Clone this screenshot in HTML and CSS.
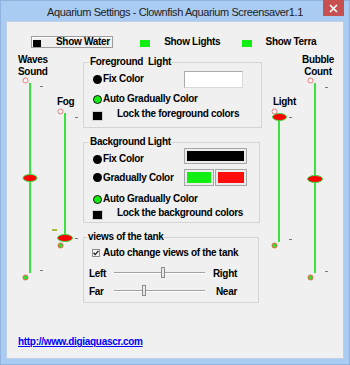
FILE: index.html
```html
<!DOCTYPE html>
<html>
<head>
<meta charset="utf-8">
<title>Aquarium Settings</title>
<link rel="stylesheet" href="styles.css">
</head>
<body>
<div class="window">
  <div class="titlebar">
    <span class="title-text">Aquarium Settings - Clownfish Aquarium Screensaver1.1</span>
    <div class="close-btn">
      <svg width="9" height="9" viewBox="0 0 9 9"><path d="M1 1 L8 8 M8 1 L1 8" stroke="#fff" stroke-width="1.6"/></svg>
    </div>
  </div>
  <div class="client">
    <div class="toprow">
      <div class="water-btn"><span class="sq sq-black"></span><span class="water-text">Show Water</span></div>
      <div class="toggle"><span class="sq sq-green"></span><span class="toggle-text">Show Lights</span></div>
      <div class="toggle"><span class="sq sq-green"></span><span class="toggle-text">Show Terra</span></div>
    </div>

    <div class="main">
      <div class="side side-left">
        <div class="vslider vs-waves">
          <div class="vs-label">Waves<br>Sound</div>
          <svg class="vs-svg" width="26" height="202" viewBox="0 0 26 202">
            <circle cx="7.5" cy="2.5" r="2.5" fill="#f6f6f6" stroke="#f07a7a" stroke-width="1"/>
            <rect x="11" y="5" width="2" height="190" fill="#3ee23e"/>
            <rect x="22" y="8" width="3" height="1" fill="#7a7a7a"/>
            <ellipse cx="12" cy="100" rx="7" ry="3.5" fill="#ff0000" stroke="#3ed83e" stroke-width="1"/>
            <rect x="22" y="192" width="3" height="1" fill="#7a7a7a"/>
            <circle cx="7.5" cy="199.5" r="2.5" fill="#2ee02e" stroke="#f0604a" stroke-width="1"/>
          </svg>
        </div>
        <div class="vslider vs-fog">
          <div class="vs-label">Fog</div>
          <svg class="vs-svg" width="30" height="141" viewBox="0 0 30 141">
            <circle cx="9.5" cy="3.5" r="2.5" fill="#f6f6f6" stroke="#f07a7a" stroke-width="1"/>
            <rect x="13" y="5" width="2" height="125" fill="#3ee23e"/>
            <rect x="24" y="9" width="3" height="1" fill="#7a7a7a"/>
            <rect x="1" y="121" width="5" height="2" fill="#a9b640"/>
            <ellipse cx="14" cy="130" rx="7.5" ry="3.5" fill="#ff0000" stroke="#3ed83e" stroke-width="1"/>
            <rect x="24" y="130" width="3" height="1" fill="#7a7a7a"/>
            <circle cx="9.5" cy="137.5" r="2.5" fill="#2ee02e" stroke="#f0604a" stroke-width="1"/>
          </svg>
        </div>
      </div>

      <div class="center">
        <div class="group group-fg">
          <div class="group-title">Foreground  Light</div>
          <div class="row fg-row1">
            <span class="dot dot-black"></span><span class="opt-label">Fix Color</span>
            <span class="swatch swatch-white"></span>
          </div>
          <div class="row fg-row2">
            <span class="dot dot-green"></span><span class="opt-label">Auto Gradually Color</span>
          </div>
          <div class="row lock-row fg-row3">
            <span class="lock-sq"></span><span class="lock-text">Lock the foreground colors</span>
          </div>
        </div>

        <div class="group group-bg">
          <div class="group-title">Background Light</div>
          <div class="row bg-row1">
            <span class="dot dot-black"></span><span class="opt-label">Fix Color</span>
            <span class="swatch swatch-black"></span>
          </div>
          <div class="row bg-row2">
            <span class="dot dot-black"></span><span class="opt-label">Gradually Color</span>
            <span class="swatch swatch-green"></span><span class="swatch swatch-red"></span>
          </div>
          <div class="row bg-row3">
            <span class="dot dot-green"></span><span class="opt-label">Auto Gradually Color</span>
          </div>
          <div class="row lock-row bg-row4">
            <span class="lock-sq"></span><span class="lock-text">Lock the background colors</span>
          </div>
        </div>

        <div class="group group-views">
          <div class="group-title">views of the tank</div>
          <div class="row check-row">
            <svg class="checkbox" width="8" height="8" viewBox="0 0 8 8">
              <rect x="0.5" y="0.5" width="7" height="7" fill="#f4f4f4" stroke="#8a8a8a"/>
              <path d="M1.6 3.8 L3.2 5.6 L6.4 1.8" fill="none" stroke="#1a1a1a" stroke-width="1.3"/>
            </svg>
            <span class="check-text">Auto change views of the tank</span>
          </div>
          <div class="row hs-row hs-lr">
            <span class="hs-start">Left</span>
            <div class="track"><div class="groove"></div><div class="hthumb" style="left:47px"></div></div>
            <span class="hs-end">Right</span>
          </div>
          <div class="row hs-row hs-fn">
            <span class="hs-start">Far</span>
            <div class="track"><div class="groove"></div><div class="hthumb" style="left:28px"></div></div>
            <span class="hs-end">Near</span>
          </div>
        </div>
      </div>

      <div class="side side-right">
        <div class="vslider vs-light">
          <div class="vs-label">Light</div>
          <svg class="vs-svg" width="28" height="141" viewBox="0 0 28 141">
            <circle cx="4.5" cy="3.5" r="2.5" fill="#f6f6f6" stroke="#f07a7a" stroke-width="1"/>
            <rect x="8" y="9" width="2" height="125" fill="#3ee23e"/>
            <ellipse cx="9.5" cy="9" rx="7" ry="3.5" fill="#ff0000" stroke="#3ed83e" stroke-width="1"/>
            <rect x="19" y="9" width="3" height="1" fill="#7a7a7a"/>
            <rect x="19" y="131" width="3" height="1" fill="#7a7a7a"/>
            <circle cx="4.5" cy="137.5" r="2.5" fill="#2ee02e" stroke="#f0604a" stroke-width="1"/>
          </svg>
        </div>
        <div class="vslider vs-bubble">
          <div class="vs-label">Bubble<br>Count</div>
          <svg class="vs-svg" width="28" height="202" viewBox="0 0 28 202">
            <circle cx="8.5" cy="2.5" r="2.5" fill="#f6f6f6" stroke="#f07a7a" stroke-width="1"/>
            <rect x="12" y="5" width="2" height="190" fill="#3ee23e"/>
            <rect x="23" y="9" width="3" height="1" fill="#7a7a7a"/>
            <ellipse cx="13" cy="101" rx="7.5" ry="3.5" fill="#ff0000" stroke="#3ed83e" stroke-width="1"/>
            <rect x="23" y="193" width="3" height="1" fill="#7a7a7a"/>
            <circle cx="8.5" cy="199.5" r="2.5" fill="#2ee02e" stroke="#f0604a" stroke-width="1"/>
          </svg>
        </div>
      </div>
    </div>

    <a class="link" href="#">http://www.digiaquascr.com</a>
  </div>
</div>
</body>
</html>
```

FILE: styles.css
```css
* { box-sizing: border-box; }
html, body { margin: 0; padding: 0; }
body {
  width: 350px;
  height: 365px;
  overflow: hidden;
  background: #aacbf2;
  font-family: "Liberation Sans", Arial, sans-serif;
}
.window {
  width: 350px;
  height: 365px;
  background: #aacbf2;
  border: 1px solid #8fb2df;
  padding: 0 6px 6px 6px;
  display: flex;
  flex-direction: column;
}
.titlebar {
  position: relative;
  height: 21px;
  margin: 0 -6px;
  display: flex;
  align-items: center;
  justify-content: center;
}
.title-text {
  font-family: "Liberation Sans", Arial, sans-serif;
  font-size: 11px;
  letter-spacing: -0.4px;
  color: #222;
  padding-top: 1px;
}
.close-btn {
  position: absolute;
  top: -1px;
  right: 5px;
  width: 21px;
  height: 16px;
  background: #c75050;
  display: flex;
  align-items: center;
  justify-content: center;
}
.close-btn svg { display: block; }

.client {
  flex: 1;
  background: #f0f0f0;
  box-shadow: 0 0 0 1px #bccfe7;
  display: flex;
  flex-direction: column;
  font-family: "Liberation Sans", Arial, sans-serif;
  font-size: 10px;
  font-weight: bold;
  letter-spacing: -0.3px;
  color: #000;
}

/* top row */
.toprow {
  display: flex;
  align-items: stretch;
  padding: 14px 0 0 24px;
  height: 26px;
}
.water-btn {
  width: 85px;
  height: 12px;
  border: 1px solid #9c9c9c;
  background: #efefef;
  box-shadow: inset 1px 1px 0 #fff;
  display: flex;
  align-items: center;
  margin-right: 27px;
}
.sq { display: block; }
.sq-black {
  width: 8px;
  height: 7px;
  background: #000;
  margin-left: 1px;
  align-self: flex-end;
}
.water-text { margin-left: 15px; line-height: 10px; }
.toggle {
  width: 105px;
  display: flex;
  align-items: center;
}
.sq-green {
  width: 10px;
  height: 7px;
  background: #11ee11;
  align-self: flex-end;
  margin-bottom: 1px;
}
.toggle-text { margin-left: 14px; line-height: 10px; }

/* main area */
.main {
  display: flex;
  margin-top: 6px;
  height: 262px;
}
.side { display: flex; align-items: flex-start; }
.side-left { width: 76px; padding-left: 11px; }
.side-right { flex: 1; padding-left: 8px; }
.vslider { display: flex; flex-direction: column; }
.vs-label { line-height: 12px; white-space: nowrap; }
.vs-svg { display: block; overflow: visible; }
.vs-waves { width: 33px; }
.vs-fog { width: 30px; margin-top: 42px; }
.vs-fog .vs-label { padding-left: 6px; }
.vs-light { width: 32px; margin-top: 42px; }
.vs-light .vs-label { padding-left: 3px; }
.vs-bubble { width: 33px; }
.vs-bubble .vs-label { width: 32px; text-align: center; }

.center {
  width: 179px;
  padding-top: 8px;
  display: flex;
  flex-direction: column;
  gap: 14px;
}
.group {
  border: 1px solid #d4d4d4;
}
.group-fg { height: 66px; width: 179px; }
.group-bg { height: 81px; width: 177px; }
.group-views { height: 66px; width: 176px; }
.group-title {
  width: max-content;
  margin: -7px 0 0 5px;
  padding: 0 1px;
  background: #f0f0f0;
  line-height: 12px;
  height: 12px;
  white-space: pre;
}
.group-views .group-title { margin-left: 3px; }

.row {
  display: flex;
  align-items: center;
  padding-left: 9px;
}
.dot {
  width: 9px;
  height: 9px;
  border-radius: 50%;
  flex: none;
}
.dot-black { background: #000; }
.dot-green { background: #11ee11; border: 1px solid #111; }
.opt-label { margin-left: 1px; width: 81px; white-space: nowrap; line-height: 12px; }
.swatch { display: block; flex: none; border: 1px solid #a6a6a6; box-shadow: inset 0 0 0 2px #ececec; }
.swatch-white { width: 59px; height: 17px; background: #fff; box-shadow: none; border-color: #ababab #d8d8d8 #d8d8d8 #ababab; }
.swatch-black { width: 63px; height: 16px; background: #000; align-self: flex-start; margin-top: -2px; }
.swatch-green { width: 30px; height: 17px; background: #11ee11; }
.swatch-red { width: 32px; height: 17px; background: #ff0d0d; margin-left: 1px; }

.fg-row1 { margin-top: 2px; height: 18px; }
.fg-row2 { margin-top: 4px; height: 14px; }
.fg-row3 { margin-top: 2px; }
.lock-row { height: 12px; align-items: flex-start; }
.lock-sq {
  width: 9px;
  height: 8px;
  background: #000;
  margin-top: 4px;
  box-shadow: 0 0 0 1px #d0d0d0;
  flex: none;
}
.lock-text { margin-left: 15px; line-height: 12px; white-space: nowrap; }

.bg-row1 { margin-top: 2px; height: 18px; }
.bg-row2 { height: 19px; }
.bg-row3 { margin-top: 5px; height: 14px; }
.bg-row4 { margin-top: 1px; }

.check-row { margin-top: 4px; height: 12px; padding-left: 8px; }
.checkbox { display: block; flex: none; }
.check-text { margin-left: 3px; line-height: 12px; white-space: nowrap; }

.hs-row { padding-left: 5px; height: 12px; font-size: 10px; }
.hs-lr { margin-top: 9px; }
.hs-fn { margin-top: 6px; }
.hs-start { width: 25px; line-height: 12px; }
.hs-end { width: 32px; text-align: right; line-height: 12px; }
.track {
  position: relative;
  width: 91px;
  height: 12px;
}
.groove {
  margin-top: 4px;
  height: 2px;
  border-top: 1px solid #a2a2a2;
  border-bottom: 1px solid #ffffff;
}
.hthumb {
  position: absolute;
  top: -1px;
  width: 4px;
  height: 11px;
  border: 1px solid #8c8c8c;
  background: #e9e9e9;
}

.link {
  margin: 20px 0 0 11px;
  color: #0000ff;
  text-decoration: underline;
  line-height: 12px;
  width: max-content;
}
```
